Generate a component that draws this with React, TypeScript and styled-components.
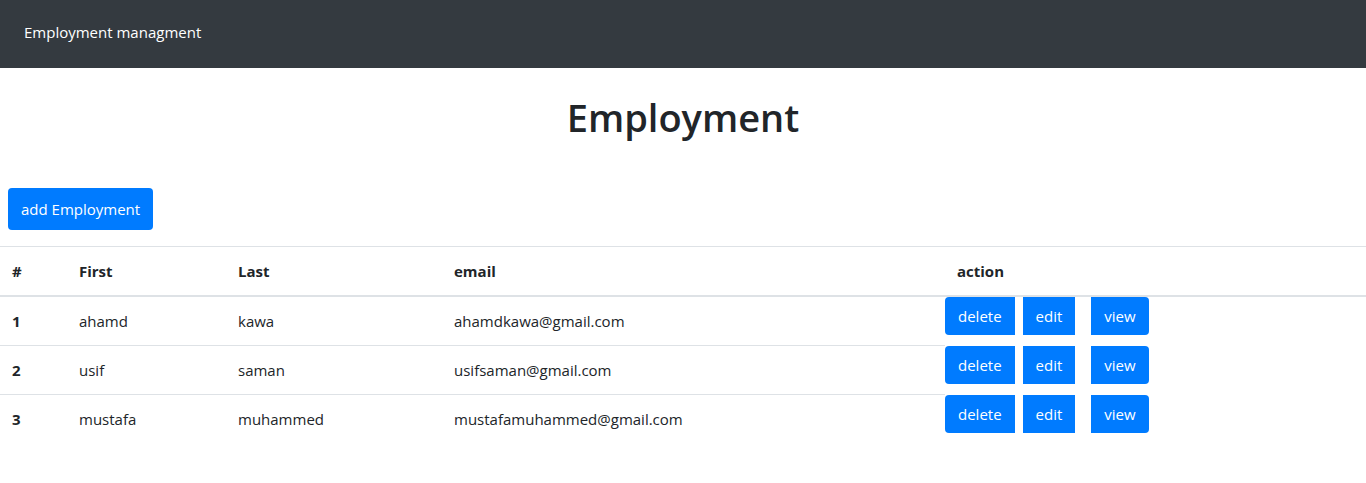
import React from "react";
import styled, { createGlobalStyle } from "styled-components";

interface Employee {
  id: number;
  first: string;
  last: string;
  email: string;
}

const employees: Employee[] = [
  { id: 1, first: "ahamd", last: "kawa", email: "ahamdkawa@gmail.com" },
  { id: 2, first: "usif", last: "saman", email: "usifsaman@gmail.com" },
  { id: 3, first: "mustafa", last: "muhammed", email: "mustafamuhammed@gmail.com" },
];

const App: React.FC = () => {
  return (
    <>
      <GlobalStyle />
      <Navbar>
        <Brand>Employment managment</Brand>
      </Navbar>
      <Title>Employment</Title>
      <AddButton type="button">add Employment</AddButton>
      <Table>
        <thead>
          <tr>
            <Th $width={67}>#</Th>
            <Th $width={159}>First</Th>
            <Th $width={216}>Last</Th>
            <Th $width={503}>email</Th>
            <Th>action</Th>
          </tr>
        </thead>
        <tbody>
          {employees.map((emp) => (
            <tr key={emp.id}>
              <Td $bold>{emp.id}</Td>
              <Td>{emp.first}</Td>
              <Td>{emp.last}</Td>
              <Td>{emp.email}</Td>
              <ActionCell>
                <ButtonGroup>
                  <ActionButton type="button" $pos="first">delete</ActionButton>
                  <ActionButton type="button" $pos="middle">edit</ActionButton>
                  <ActionButton type="button" $pos="last">view</ActionButton>
                </ButtonGroup>
              </ActionCell>
            </tr>
          ))}
        </tbody>
      </Table>
    </>
  );
};

// CSS
const GlobalStyle = createGlobalStyle`
  body {
    margin: 0;
    font-family: "Open Sans", "Noto Sans", Arial, sans-serif;
    font-size: 16px;
    line-height: 1.5;
    color: #212529;
    background: #ffffff;
  }
`;

const Navbar = styled.nav`
  height: 68px;
  background: #343a40;
  display: flex;
  align-items: center;
  padding: 0 24px;
`;

const Brand = styled.span`
  color: #ffffff;
  font-size: 15px;
  margin-top: -3px;
`;

const Title = styled.h1`
  margin: 27px 0 47px;
  text-align: center;
  font-size: 38px;
  font-weight: 600;
  line-height: 1.2;
  color: #212529;
`;

const AddButton = styled.button`
  display: block;
  margin: 0 0 16px 8px;
  height: 42px;
  padding: 0 13px;
  background: #007bff;
  color: #ffffff;
  border: none;
  border-radius: 4px;
  font-family: inherit;
  font-size: 15px;
  cursor: pointer;
`;

const Table = styled.table`
  width: 100%;
  border-collapse: collapse;
  font-size: 15px;
  line-height: 24px;
`;

const Th = styled.th<{ $width?: number }>`
  width: ${(p) => (p.$width ? `${p.$width}px` : "auto")};
  box-sizing: border-box;
  padding: 12px;
  text-align: left;
  font-weight: 700;
  border-top: 1px solid #dee2e6;
  border-bottom: 2px solid #dee2e6;
`;

const Td = styled.td<{ $bold?: boolean }>`
  padding: 12px;
  font-weight: ${(p) => (p.$bold ? 700 : 400)};
  border-top: 1px solid #dee2e6;
  vertical-align: top;
  tr:first-child > & {
    border-top: none;
  }
`;

const ActionCell = styled.td`
  padding: 0;
  vertical-align: top;
  border-top: 1px solid transparent;
  tr:first-child > & {
    border-top: none;
  }
`;

const ButtonGroup = styled.div`
  display: flex;
  gap: 8px;
`;

const ActionButton = styled.button<{ $pos: "first" | "middle" | "last" }>`
  height: 38px;
  padding: 0 13px;
  background: #007bff;
  color: #ffffff;
  border: none;
  font-family: inherit;
  font-size: 15px;
  cursor: pointer;
  border-radius: ${(p) =>
    p.$pos === "first" ? "4px 0 0 4px" : p.$pos === "last" ? "0 4px 4px 0" : "0"};
  margin-left: ${(p) => (p.$pos === "last" ? "8px" : "0")};
`;

export default App;
